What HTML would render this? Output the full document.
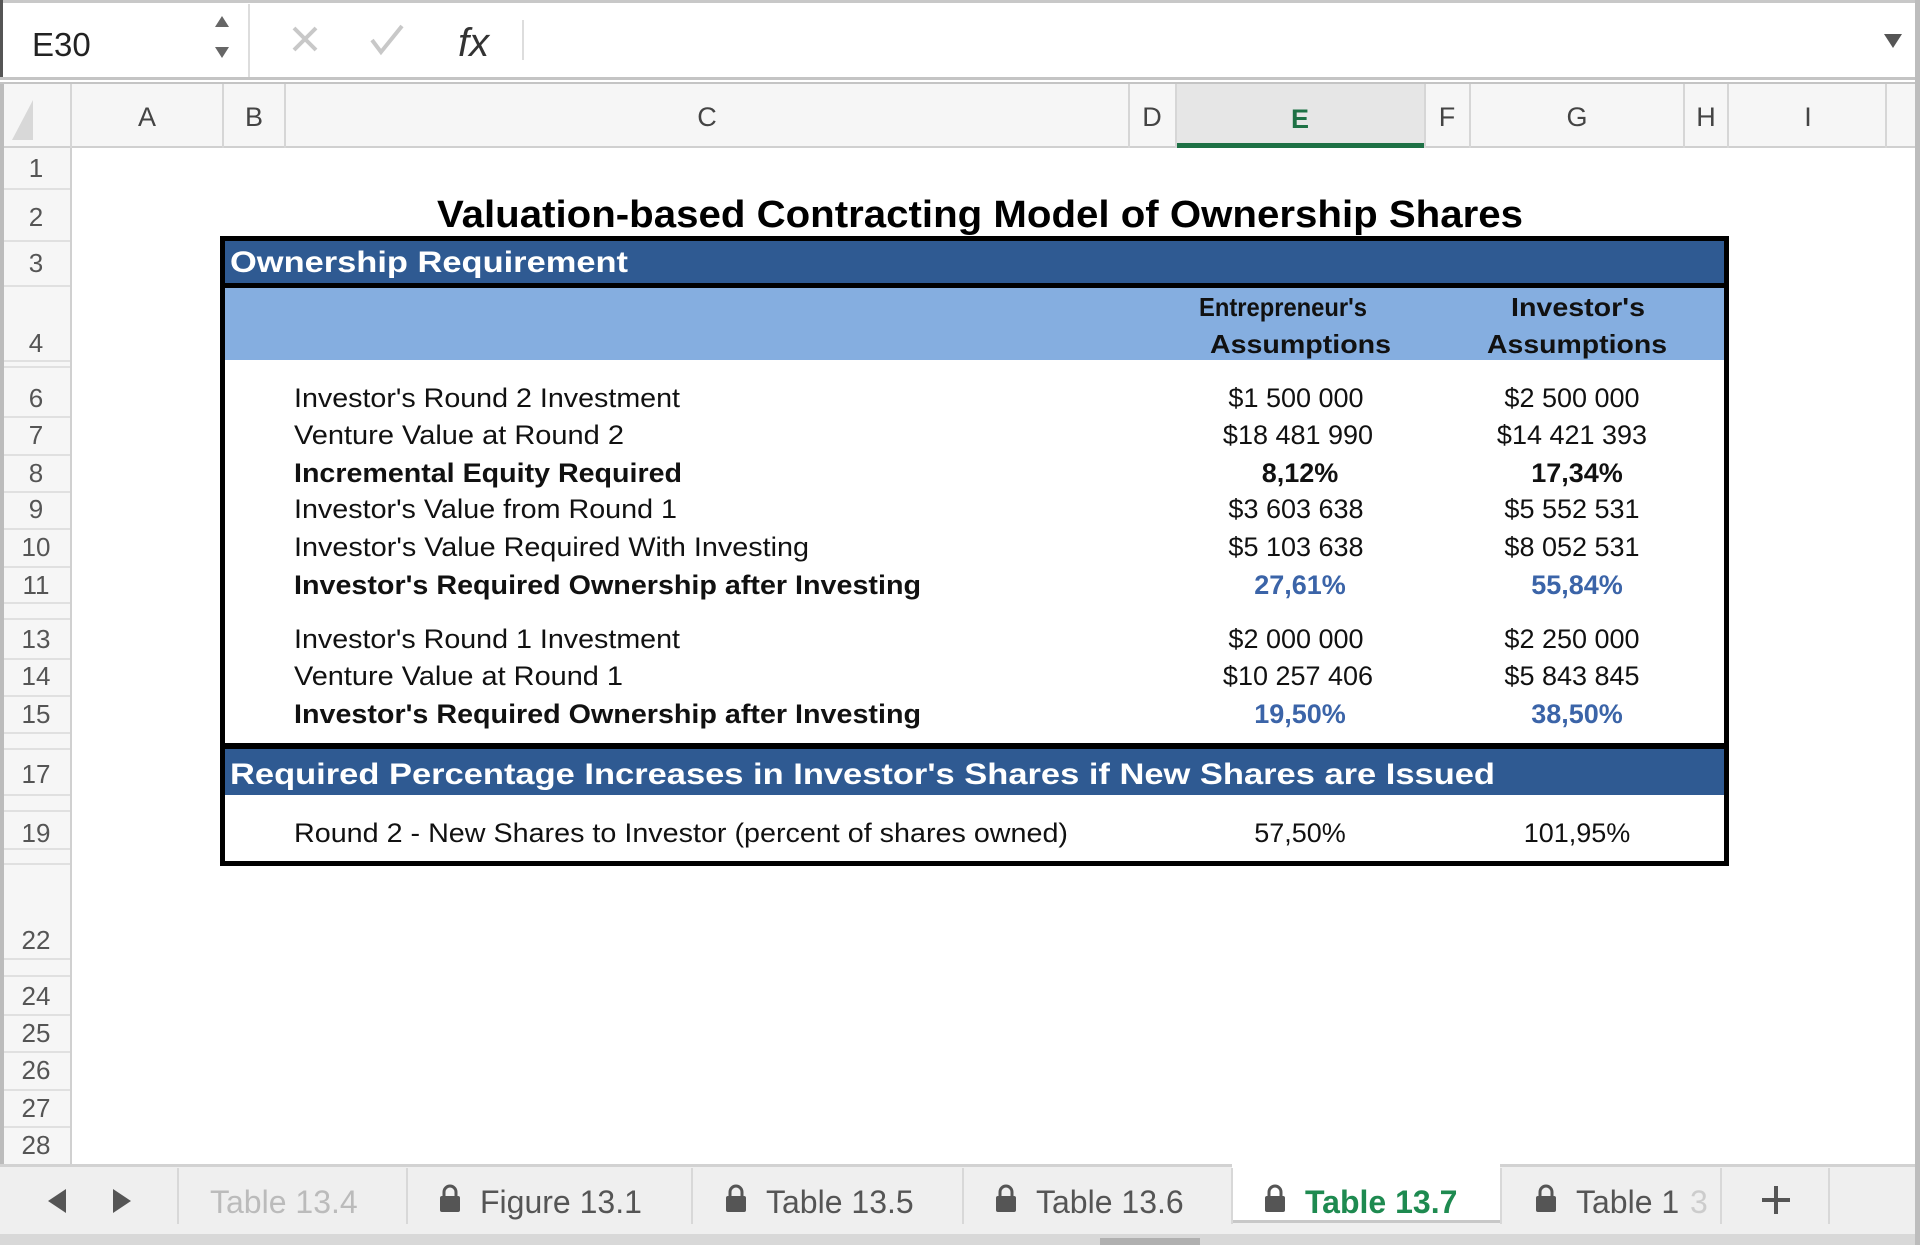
<!DOCTYPE html>
<html><head><meta charset="utf-8"><style>
html,body{margin:0;padding:0;background:#fff;}
body{width:1920px;height:1245px;overflow:hidden;position:relative;font-family:"Liberation Sans",Arial,sans-serif;}
svg text{font-family:"Liberation Sans",Arial,sans-serif;}
</style></head><body>
<svg width="1920" height="1245" viewBox="0 0 1920 1245" xmlns="http://www.w3.org/2000/svg">
<!-- formula bar -->
<rect x="0" y="0" width="1920" height="80" fill="#fff"/>
<rect x="0" y="0" width="1920" height="3" fill="#c8c8c8"/>
<rect x="0" y="0" width="3" height="80" fill="#555"/>
<text x="32" y="56" font-size="33" fill="#222">E30</text>
<path d="M215 27 L222 16 L229 27 Z" fill="#666"/>
<path d="M215 47 L222 58 L229 47 Z" fill="#666"/>
<rect x="248" y="4" width="2" height="74" fill="#ddd"/>
<path d="M294 28 L316 50 M316 28 L294 50" stroke="#c8c8c8" stroke-width="4"/>
<path d="M372 40 L381 52 L402 26" stroke="#c8c8c8" stroke-width="4" fill="none"/>
<text x="458" y="56" font-size="40" font-style="italic" fill="#333" font-family="Liberation Serif">fx</text>
<rect x="522" y="20" width="2" height="40" fill="#ddd"/>
<path d="M1884 34 L1902 34 L1893 48 Z" fill="#555"/>
<rect x="0" y="77" width="1920" height="3" fill="#c4c4c4"/>
<rect x="0" y="82" width="1920" height="2" fill="#c4c4c4"/>
<rect x="1915" y="0" width="5" height="1245" fill="#bdbdbd"/>
<!-- column header -->
<rect x="0" y="84" width="1915" height="64" fill="#f6f6f6"/>
<rect x="0" y="146" width="1915" height="2" fill="#d0d0d0"/>
<path d="M12 140 L33 140 L33 100 Z" fill="#d8d8d8"/>
<rect x="1176" y="84" width="248" height="62" fill="#e6e6e6"/>
<rect x="1176" y="143" width="248" height="5" fill="#1e7145"/>
<g fill="#d6d6d6">
<rect x="70" y="84" width="2" height="64"/><rect x="222" y="84" width="2" height="64"/><rect x="284" y="84" width="2" height="64"/>
<rect x="1128" y="84" width="2" height="64"/><rect x="1175" y="84" width="2" height="64"/><rect x="1424" y="84" width="2" height="64"/>
<rect x="1469" y="84" width="2" height="64"/><rect x="1683" y="84" width="2" height="64"/><rect x="1727" y="84" width="2" height="64"/><rect x="1885" y="84" width="2" height="64"/>
</g>
<g font-size="27" fill="#444" text-anchor="middle">
<text x="147" y="126">A</text><text x="254" y="126">B</text><text x="707" y="126">C</text><text x="1152" y="126">D</text>
<text x="1300" y="128" fill="#1e7145" font-weight="bold">E</text><text x="1447" y="126">F</text><text x="1577" y="126">G</text>
<text x="1706" y="126">H</text><text x="1808" y="126">I</text>
</g>
<!-- row header -->
<rect x="0" y="148" width="71" height="1018" fill="#f6f6f6"/>
<rect x="0" y="84" width="4" height="1090" fill="#bcbcbc"/>
<rect x="70" y="148" width="2" height="1018" fill="#d0d0d0"/>
<g fill="#e0e0e0">
<rect x="4" y="188" width="66" height="2"/><rect x="4" y="240" width="66" height="2"/><rect x="4" y="285" width="66" height="2"/>
<rect x="4" y="360" width="66" height="2"/><rect x="4" y="366" width="66" height="2"/><rect x="4" y="416" width="66" height="2"/>
<rect x="4" y="454" width="66" height="2"/><rect x="4" y="491" width="66" height="2"/><rect x="4" y="528" width="66" height="2"/>
<rect x="4" y="566" width="66" height="2"/><rect x="4" y="602" width="66" height="2"/><rect x="4" y="618" width="66" height="2"/>
<rect x="4" y="658" width="66" height="2"/><rect x="4" y="695" width="66" height="2"/><rect x="4" y="732" width="66" height="2"/>
<rect x="4" y="748" width="66" height="2"/><rect x="4" y="794" width="66" height="2"/><rect x="4" y="810" width="66" height="2"/>
<rect x="4" y="848" width="66" height="2"/><rect x="4" y="863" width="66" height="2"/><rect x="4" y="958" width="66" height="2"/>
<rect x="4" y="975" width="66" height="2"/><rect x="4" y="1014" width="66" height="2"/><rect x="4" y="1051" width="66" height="2"/>
<rect x="4" y="1089" width="66" height="2"/><rect x="4" y="1126" width="66" height="2"/>
</g>
<g font-size="26" fill="#555" text-anchor="middle">
<text x="36" y="177">1</text><text x="36" y="226">2</text><text x="36" y="272">3</text><text x="36" y="352">4</text>
<text x="36" y="407">6</text><text x="36" y="444">7</text><text x="36" y="482">8</text><text x="36" y="518">9</text>
<text x="36" y="556">10</text><text x="36" y="594">11</text><text x="36" y="648">13</text><text x="36" y="685">14</text>
<text x="36" y="723">15</text><text x="36" y="783">17</text><text x="36" y="842">19</text><text x="36" y="949">22</text>
<text x="36" y="1005">24</text><text x="36" y="1042">25</text><text x="36" y="1079">26</text><text x="36" y="1117">27</text><text x="36" y="1154">28</text>
</g>
<!-- title -->
<text x="437" y="227" font-size="38" font-weight="bold" fill="#000" textLength="1086" lengthAdjust="spacingAndGlyphs">Valuation-based Contracting Model of Ownership Shares</text>
<!-- table box -->
<rect x="220" y="236" width="1509" height="630" fill="#000"/>
<rect x="225" y="241" width="1499" height="620" fill="#fff"/>
<rect x="225" y="241" width="1499" height="42" fill="#2f5a92"/>
<rect x="225" y="283" width="1499" height="5" fill="#000"/>
<rect x="225" y="288" width="1499" height="72" fill="#85aee0"/>
<rect x="225" y="743" width="1499" height="6" fill="#000"/>
<rect x="225" y="749" width="1499" height="46" fill="#2f5a92"/>
<text x="230" y="272" font-size="30" font-weight="bold" fill="#fff" textLength="398" lengthAdjust="spacingAndGlyphs">Ownership Requirement</text>
<text x="230" y="784" font-size="30" font-weight="bold" fill="#fff" textLength="1265" lengthAdjust="spacingAndGlyphs">Required Percentage Increases in Investor's Shares if New Shares are Issued</text>
<g font-size="26" font-weight="bold" fill="#111">
<text x="1199" y="316" textLength="168" lengthAdjust="spacingAndGlyphs">Entrepreneur's</text>
<text x="1210" y="353" textLength="181" lengthAdjust="spacingAndGlyphs">Assumptions</text>
<text x="1511" y="316" textLength="134" lengthAdjust="spacingAndGlyphs">Investor's</text>
<text x="1487" y="353" textLength="180" lengthAdjust="spacingAndGlyphs">Assumptions</text>
</g>
<g font-size="27" fill="#111">
<text x="294" y="407" textLength="386" lengthAdjust="spacingAndGlyphs">Investor's Round 2 Investment</text>
<text x="294" y="444" textLength="330" lengthAdjust="spacingAndGlyphs">Venture Value at Round 2</text>
<text x="294" y="482" font-weight="bold" textLength="388" lengthAdjust="spacingAndGlyphs">Incremental Equity Required</text>
<text x="294" y="518" textLength="383" lengthAdjust="spacingAndGlyphs">Investor's Value from Round 1</text>
<text x="294" y="556" textLength="515" lengthAdjust="spacingAndGlyphs">Investor's Value Required With Investing</text>
<text x="294" y="594" font-weight="bold" textLength="627" lengthAdjust="spacingAndGlyphs">Investor's Required Ownership after Investing</text>
<text x="294" y="648" textLength="386" lengthAdjust="spacingAndGlyphs">Investor's Round 1 Investment</text>
<text x="294" y="685" textLength="329" lengthAdjust="spacingAndGlyphs">Venture Value at Round 1</text>
<text x="294" y="723" font-weight="bold" textLength="627" lengthAdjust="spacingAndGlyphs">Investor's Required Ownership after Investing</text>
<text x="294" y="842" textLength="774" lengthAdjust="spacingAndGlyphs">Round 2 - New Shares to Investor (percent of shares owned)</text>
</g>
<g font-size="27" fill="#111" text-anchor="middle">
<text x="1296" y="407">$1 500 000</text><text x="1572" y="407">$2 500 000</text>
<text x="1298" y="444">$18 481 990</text><text x="1572" y="444">$14 421 393</text>
<text x="1300" y="482" font-weight="bold">8,12%</text><text x="1577" y="482" font-weight="bold">17,34%</text>
<text x="1296" y="518">$3 603 638</text><text x="1572" y="518">$5 552 531</text>
<text x="1296" y="556">$5 103 638</text><text x="1572" y="556">$8 052 531</text>
<text x="1300" y="594" font-weight="bold" fill="#3b64a8">27,61%</text><text x="1577" y="594" font-weight="bold" fill="#3b64a8">55,84%</text>
<text x="1296" y="648">$2 000 000</text><text x="1572" y="648">$2 250 000</text>
<text x="1298" y="685">$10 257 406</text><text x="1572" y="685">$5 843 845</text>
<text x="1300" y="723" font-weight="bold" fill="#3b64a8">19,50%</text><text x="1577" y="723" font-weight="bold" fill="#3b64a8">38,50%</text>
<text x="1300" y="842">57,50%</text><text x="1577" y="842">101,95%</text>
</g>
<!-- tab bar -->
<rect x="0" y="1164" width="1915" height="81" fill="#efefef"/>
<rect x="0" y="1164" width="1915" height="3" fill="#d2d2d2"/>
<rect x="1232" y="1164" width="268" height="58" fill="#fff"/>
<rect x="1232" y="1220" width="268" height="3" fill="#c8c8c8"/>
<rect x="0" y="1234" width="1915" height="11" fill="#d8d8d8"/>
<rect x="1100" y="1238" width="100" height="7" fill="#b0b0b0"/>
<g fill="#d8d8d8">
<rect x="177" y="1168" width="2" height="56"/><rect x="406" y="1168" width="2" height="56"/><rect x="691" y="1168" width="2" height="56"/>
<rect x="962" y="1168" width="2" height="56"/><rect x="1231" y="1168" width="2" height="56"/><rect x="1500" y="1168" width="2" height="56"/>
<rect x="1720" y="1168" width="2" height="56"/><rect x="1828" y="1168" width="2" height="56"/>
</g>
<path d="M66 1189 L48 1201 L66 1213 Z" fill="#555"/>
<path d="M113 1189 L131 1201 L113 1213 Z" fill="#555"/>
<defs><g id="lk"><path d="M4 10 V6 a6 6 0 0 1 12 0 V10" stroke="#555" stroke-width="3" fill="none"/><rect x="0" y="10" width="20" height="16" rx="2" fill="#555"/></g></defs>
<text x="210" y="1213" font-size="32" fill="#bbb">Table 13.4</text>
<use href="#lk" x="440" y="1186"/><text x="480" y="1213" font-size="32" fill="#555">Figure 13.1</text>
<use href="#lk" x="726" y="1186"/><text x="766" y="1213" font-size="32" fill="#555">Table 13.5</text>
<use href="#lk" x="996" y="1186"/><text x="1036" y="1213" font-size="32" fill="#555">Table 13.6</text>
<use href="#lk" x="1265" y="1186"/><text x="1305" y="1213" font-size="32" fill="#1e8a50" font-weight="bold">Table 13.7</text>
<use href="#lk" x="1536" y="1186"/><text x="1576" y="1213" font-size="32" fill="#555">Table 1</text><text x="1690" y="1213" font-size="32" fill="#ccc">3</text>
<path d="M1762 1200 H1790 M1776 1186 V1214" stroke="#555" stroke-width="4"/>
</svg>
</body></html>
